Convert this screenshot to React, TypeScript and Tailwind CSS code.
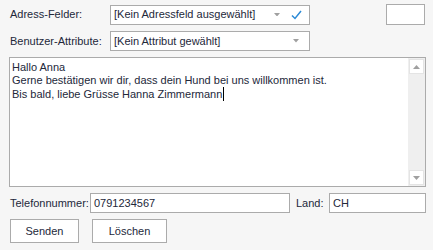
import React from "react";

const font = { fontFamily: '"Liberation Sans", Arial, sans-serif' };

function Arrow({ up = false, w = 7 }: { up?: boolean; w?: number }) {
  return (
    <svg width={w} height={w / 2 + 0.5} viewBox={`0 0 ${w} ${w / 2 + 0.5}`} className={up ? "rotate-180" : ""}>
      <path d={`M0 0 H${w} L${w / 2} ${w / 2 + 0.5} Z`} fill="#a0a0a0" />
    </svg>
  );
}

function Combo({ text, check = false }: { text: string; check?: boolean }) {
  return (
    <div className="flex items-center w-[200px] h-[20px] border border-[#ababab] bg-white pl-[3px] pr-[7px]">
      <span className="flex-1 text-[11px] text-[#23283a] truncate">{text}</span>
      <span className="w-[12px] flex justify-center">
        <Arrow w={6} />
      </span>
      {check && (
        <svg width="11" height="10" viewBox="0 0 11 10" className="ml-[8px]">
          <path d="M1 5.5 L4 8.5 L10 1" fill="none" stroke="#2b8ad6" strokeWidth="1.5" />
        </svg>
      )}
    </div>
  );
}

export default function App() {
  return (
    <div
      className="w-[433px] h-[250px] bg-[#f6f6f6] text-[11px] text-[#23283a] flex flex-col pt-[4px]"
      style={font}
    >
      <div className="flex items-center h-[21px]">
        <span className="w-[110px] pl-[10px]">Adress-Felder:</span>
        <Combo text="[Kein Adressfeld ausgewählt]" check />
        <div className="ml-auto mr-[8px] w-[39px] h-[21px] border border-[#ababab] bg-white" />
      </div>
      <div className="flex items-center h-[20px] mt-[6px]">
        <span className="w-[110px] pl-[10px]">Benutzer-Attribute:</span>
        <Combo text="[Kein Attribut gewählt]" />
      </div>
      <div className="ml-[9px] mt-[6px] w-[417px] h-[130px] border border-[#ababab] bg-white flex">
        <div className="flex-1 pl-[2px] pt-[3px] leading-[13px]">
          <div>Hallo Anna</div>
          <div>Gerne bestätigen wir dir, dass dein Hund bei uns willkommen ist.</div>
          <div className="flex items-center">
            Bis bald, liebe Grüsse Hanna Zimmermann
            <span className="inline-block w-px h-[14px] bg-black ml-px" />
          </div>
        </div>
        <div className="w-[17px] bg-[#efefef] flex flex-col justify-between items-center py-[1px]">
          <div className="w-[15px] h-[15px] bg-white border border-[#e4e4e4] flex items-center justify-center">
            <Arrow up />
          </div>
          <div className="w-[15px] h-[15px] bg-white border border-[#e4e4e4] flex items-center justify-center">
            <Arrow />
          </div>
        </div>
      </div>
      <div className="flex items-center h-[20px] mt-[6px]">
        <span className="w-[90px] pl-[10px]">Telefonnummer:</span>
        <div className="w-[200px] h-[20px] border border-[#ababab] bg-white pl-[3px] flex items-center">
          0791234567
        </div>
        <span className="w-[39px] pl-[6px]">Land:</span>
        <div className="w-[97px] h-[20px] border border-[#ababab] bg-white pl-[3px] flex items-center">
          CH
        </div>
      </div>
      <div className="flex items-center mt-[6px] pl-[10px] gap-[13px]">
        <button className="w-[69px] h-[24px] border border-[#ababab] bg-white text-[11px] text-[#23283a]">
          Senden
        </button>
        <button className="w-[75px] h-[24px] border border-[#ababab] bg-white text-[11px] text-[#23283a]">
          Löschen
        </button>
      </div>
    </div>
  );
}
